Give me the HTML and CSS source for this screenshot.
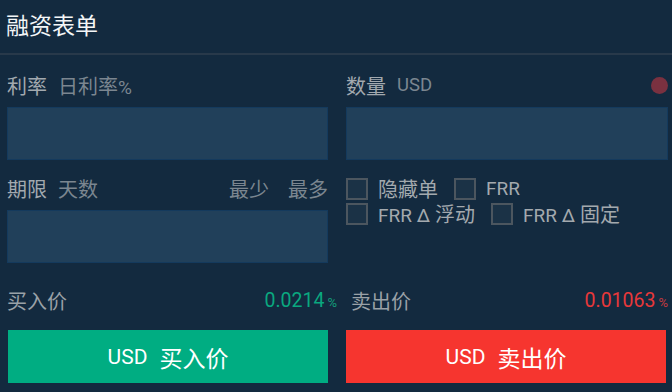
FILE: index.html
```html
<!DOCTYPE html>
<html lang="zh-CN">
<head>
<meta charset="utf-8">
<title>融资表单</title>
<link rel="stylesheet" href="styles.css">
</head>
<body>
<div class="header"><h1 class="title">融资表单</h1></div>
<div class="form">
  <div class="col">
    <div class="field">
      <div class="label-row"><span class="label">利率</span><span class="hint">日利率<span class="pct-label">%</span></span></div>
      <div class="input"></div>
    </div>
    <div class="field field-second">
      <div class="label-row"><span class="label">期限</span><span class="hint">天数</span><span class="spacer"></span><span class="hint">最少</span><span class="hint">最多</span></div>
      <div class="input"></div>
    </div>
  </div>
  <div class="col">
    <div class="field">
      <div class="label-row"><span class="label">数量</span><span class="hint lat">USD</span><span class="spacer"></span><span class="dot"></span></div>
      <div class="input"></div>
    </div>
    <div class="checks">
      <div class="check-row">
        <label class="check"><span class="box"></span><span class="check-text">隐藏单</span></label>
        <label class="check"><span class="box"></span><span class="check-text lat">FRR</span></label>
      </div>
      <div class="check-row">
        <label class="check"><span class="box"></span><span class="check-text"><span class="lat">FRR Δ</span> 浮动</span></label>
        <label class="check"><span class="box"></span><span class="check-text"><span class="lat">FRR Δ</span> 固定</span></label>
      </div>
    </div>
  </div>
  <div class="price price-buy"><span class="price-label">买入价</span><span class="price-value buy">0.0214<span class="pct">%</span></span></div>
  <div class="price price-sell"><span class="price-label">卖出价</span><span class="price-value sell">0.01063<span class="pct">%</span></span></div>
  <div class="btn btn-buy"><span class="btn-lat">USD</span><span class="btn-cjk">买入价</span></div>
  <div class="btn btn-sell"><span class="btn-lat">USD</span><span class="btn-cjk">卖出价</span></div>
</div>
</body>
</html>
```
FILE: styles.css
```css
html, body {
  margin: 0;
  padding: 0;
  background: #132a3f;
  width: 672px;
  height: 392px;
  overflow: hidden;
  font-family: Roboto, "Noto Sans CJK SC", sans-serif;
}
.header {
  height: 53px;
  border-bottom: 2px solid #28394a;
  display: flex;
  align-items: center;
  padding: 0 6px;
}
.title {
  margin: 0;
  font-size: 23px;
  font-weight: 400;
  color: #f4f6f7;
  line-height: 1;
}
.form {
  display: grid;
  grid-template-columns: 321px 322px;
  column-gap: 18px;
  padding: 16px 4px 0 7px;
}
.col {
  display: flex;
  flex-direction: column;
}
.field-second {
  margin-top: 14px;
}
.label-row {
  height: 28px;
  display: flex;
  align-items: center;
  gap: 11px;
  font-size: 20px;
  margin-bottom: 8px;
}
.lat { font-size: 18.5px; }
.pct-label { font-size: 19px; }
.label { color: #a2a9af; }
.hint { color: #7b8690; }
.spacer { flex: 1; }
.label-row .hint + .hint { margin-left: 8px; }
.label-row .spacer + .hint { margin-left: -11px; }
.dot {
  width: 17px;
  height: 17px;
  border-radius: 50%;
  background: #7a3140;
}
.input {
  height: 51px;
  background: #21405a;
  border: 1px solid #143a5d;
}
.checks {
  margin-top: 18px;
  display: flex;
  flex-direction: column;
  gap: 4px;
}
.check-row {
  display: flex;
  gap: 16px;
}
.check {
  display: flex;
  align-items: center;
  gap: 10px;
  font-size: 20px;
  color: #a3a9ae;
  height: 21px;
}
.check .lat { font-size: 19px; }
.box {
  width: 18px;
  height: 18px;
  border: 2px solid #4c565f;
  background: #1b3246;
}
.price {
  margin-top: 26px;
  height: 22px;
  display: flex;
  align-items: center;
  justify-content: space-between;
  font-size: 20px;
}
.price-buy { margin-right: -9px; }
.price-sell { padding-left: 5px; }
.price-label { color: #9aa1a7; }
.price-value { font-size: 19.5px; }
.buy { color: #0aa87f; }
.sell { color: #e8383a; }
.pct {
  font-size: 13px;
  margin-left: 3px;
}
.buy .pct { color: #139c7a; }
.sell .pct { color: #c33a40; }
.btn {
  margin-top: 19px;
  height: 53px;
  display: flex;
  align-items: center;
  justify-content: center;
  gap: 12px;
  color: #ffffff;
}
.btn-lat { font-size: 21px; }
.btn-cjk { font-size: 23px; }
.btn-buy {
  background: #00ad82;
  margin-left: 1px;
}
.btn-sell {
  background: #f6352f;
  margin-right: 2px;
}
```
